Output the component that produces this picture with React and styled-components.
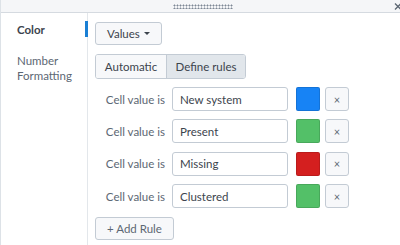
import styled, { createGlobalStyle } from "styled-components";

const GlobalStyle = createGlobalStyle`
  body {
    margin: 0;
    background: #ffffff;
    font-family: Lato, "Liberation Sans", sans-serif;
  }
`;

const Frame = styled.div`
  width: 400px;
  height: 245px;
  display: flex;
  flex-direction: column;
  overflow: hidden;
  box-sizing: border-box;
  border-left: 1px solid #dde2e7;
`;

const TopBar = styled.div`
  position: relative;
  height: 12px;
  flex: none;
  background: #f5f6f8;
  border-bottom: 1px solid #d5dae0;
  display: flex;
  align-items: center;
  justify-content: center;
`;

const Grip = styled.div`
  width: 60px;
  height: 5px;
  margin-left: 5px;
  background-image: radial-gradient(circle, #7d8895 0.9px, transparent 1.1px);
  background-size: 3px 3px;
`;

const Close = styled.svg`
  position: absolute;
  right: -2px;
  top: 3px;
`;

const Body = styled.div`
  flex: 1;
  display: flex;
`;

const Sidebar = styled.div`
  width: 86px;
  flex: none;
  padding-top: 8px;
  border-right: 1px solid #e3e7eb;
  display: flex;
  flex-direction: column;
  gap: 15px;
`;

const NavItem = styled.div`
  padding: 1px 0 0 16px;
  min-height: 15px;
  font-size: 11.5px;
  line-height: 15px;
  color: ${(props) => (props.active ? "#3c444d" : "#5c6773")};
  font-weight: ${(props) => (props.active ? 700 : 400)};
  border-right: 3px solid
    ${(props) => (props.active ? "#1a7fd4" : "transparent")};
  margin-right: -1px;
`;

const Main = styled.div`
  flex: 1;
  padding: 9px 0 0 7px;
  display: flex;
  flex-direction: column;
  align-items: flex-start;
`;

const Button = styled.div`
  box-sizing: border-box;
  height: ${(props) => props.height || "23px"};
  padding: 0 ${(props) => props.pad || "11px"};
  display: flex;
  align-items: center;
  gap: 4px;
  font-size: 11.5px;
  color: #3c444d;
  background: #f7f8fa;
  border: 1px solid #c3cbd4;
  border-radius: 3px;
`;

const Caret = styled.span`
  width: 0;
  height: 0;
  border-left: 3.5px solid transparent;
  border-right: 3.5px solid transparent;
  border-top: 3.5px solid #3c444d;
`;

const Tabs = styled.div`
  margin-top: 9px;
  display: flex;
  height: 25px;
  box-sizing: border-box;
  border: 1px solid #c3cbd4;
  border-radius: 3px;
  overflow: hidden;
`;

const Tab = styled.div`
  width: ${(props) => props.width};
  display: flex;
  align-items: center;
  justify-content: center;
  font-size: 11.5px;
  color: #3c444d;
  background: ${(props) => (props.active ? "#e1e6eb" : "#f7f8fa")};
  & + & {
    border-left: 1px solid #c3cbd4;
  }
`;

const Rules = styled.div`
  margin-top: 8px;
  display: flex;
  flex-direction: column;
  gap: 8.4px;
`;

const Row = styled.div`
  display: flex;
  align-items: center;
  height: 24px;
`;

const Label = styled.div`
  width: 70px;
  text-align: right;
  font-size: 11.5px;
  color: #5c6773;
  margin-right: 7px;
`;

const Input = styled.div`
  box-sizing: border-box;
  width: 116px;
  height: 24px;
  padding-left: 7px;
  display: flex;
  align-items: center;
  font-size: 11.5px;
  color: #3c444d;
  background: #ffffff;
  border: 1px solid #c3cbd4;
  border-radius: 3px;
`;

const Swatch = styled.div`
  box-sizing: border-box;
  width: 24px;
  height: 24px;
  margin-left: 8px;
  background: ${(props) => props.color};
  border: 1px solid rgba(0, 0, 0, 0.12);
  border-radius: 2px;
`;

const Remove = styled(Button)`
  width: 24px;
  height: 24px;
  padding: 0;
  margin-left: 5px;
  justify-content: center;
  font-size: 11px;
  color: #5c6773;
`;

const AddRule = styled(Button)`
  margin-top: 9px;
  color: #5c6773;
`;

const rules = [
  { text: "New system", color: "#1783f5" },
  { text: "Present", color: "#53c068" },
  { text: "Missing", color: "#d41f1f" },
  { text: "Clustered", color: "#53c068" },
];

export default function App() {
  return (
    <>
      <GlobalStyle />
      <Frame>
        <TopBar>
          <Grip />
          <Close width="8" height="7" viewBox="0 0 8 7">
            <path d="M1 0.5 L7 6.5 M7 0.5 L1 6.5" stroke="#5c6773" strokeWidth="1.3" />
          </Close>
        </TopBar>
        <Body>
          <Sidebar>
            <NavItem active>Color</NavItem>
            <NavItem>
              Number
              <br />
              Formatting
            </NavItem>
          </Sidebar>
          <Main>
            <Button pad="11px">
              Values <Caret />
            </Button>
            <Tabs>
              <Tab width="70px">Automatic</Tab>
              <Tab width="78px" active>
                Define rules
              </Tab>
            </Tabs>
            <Rules>
              {rules.map((rule, index) => (
                <Row key={`${index + 1}`}>
                  <Label>Cell value is</Label>
                  <Input>{rule.text}</Input>
                  <Swatch color={rule.color} />
                  <Remove>×</Remove>
                </Row>
              ))}
            </Rules>
            <AddRule>+ Add Rule</AddRule>
          </Main>
        </Body>
      </Frame>
    </>
  );
}
